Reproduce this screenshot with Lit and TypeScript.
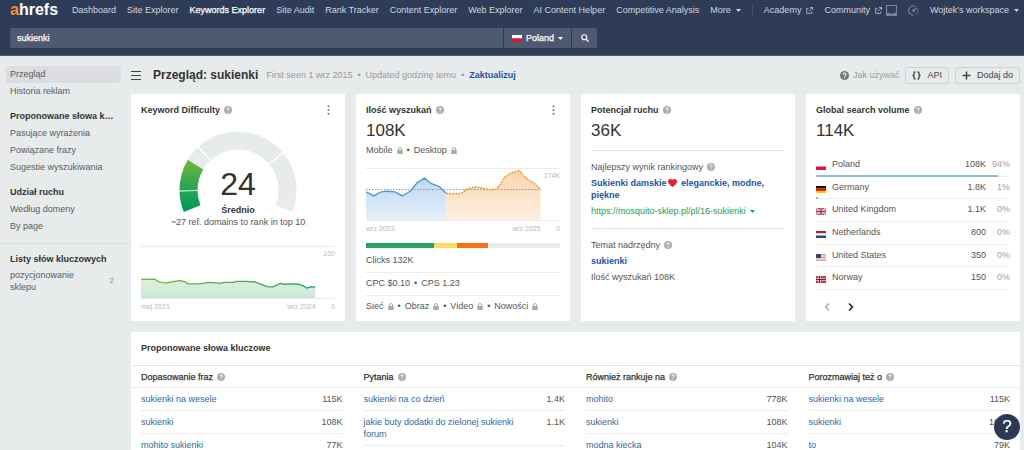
import { LitElement, html, svg, css, nothing } from "lit";
import { customElement, property } from "lit/decorators.js";

type Point = [number, number];

const CHART_W = 580;
const CHART_H = 156;

const difficulty: Point[] = [
  [0, 99], [40, 98], [52, 106], [65, 109], [77, 110], [95, 106], [117, 103], [130, 106], [142, 113], [172, 113],
  [207, 108], [235, 111], [250, 108], [275, 108], [287, 105], [312, 105], [342, 107], [362, 115], [377, 121],
  [395, 122], [417, 111], [429, 114], [442, 113], [472, 114], [484, 118], [497, 126], [508, 121], [521, 123],
];
const volume: Point[] = [
  [0, 70], [23, 82], [43, 71], [63, 68], [86, 70], [109, 82], [131, 69], [153, 42], [175, 28], [196, 45], [218, 53], [240, 75],
];
const forecast: Point[] = [
  [240, 75], [278, 76], [288, 72], [305, 60], [328, 55], [348, 58], [368, 64], [388, 62], [400, 48], [413, 27],
  [433, 12], [458, 5], [478, 28], [501, 43], [522, 62],
];

const line = (p: Point[]) => p.map(([x, y]) => `${x},${y}`).join(" ");
const area = (p: Point[]) => `${p[0][0]},${CHART_H} ${line(p)} ${p[p.length - 1][0]},${CHART_H}`;

const polar = (r: number, deg: number) => {
  const a = (deg * Math.PI) / 180;
  return `${(59 - r * Math.cos(a)).toFixed(2)} ${(59 - r * Math.sin(a)).toFixed(2)}`;
};
const ring = (from: number, to: number) =>
  `M${polar(58.5, from)}A58.5 58.5 0 0 1 ${polar(58.5, to)}L${polar(40.5, to)}A40.5 40.5 0 0 0 ${polar(40.5, from)}Z`;

const flags: Record<string, unknown> = {
  pl: svg`<path fill="#fff" d="M0 0h20v7H0z"/><path fill="#dc143c" d="M0 7h20v7H0z"/>`,
  de: svg`<path fill="#111" d="M0 0h20v5H0z"/><path fill="#e00" d="M0 5h20v5H0z"/><path fill="#fc0" d="M0 9.500h20V14H0z"/>`,
  gb: svg`<path fill="#2b3f86" d="M0 0h20v14H0z"/><path stroke="#fff" stroke-width="3" d="M0 0l20 14M20 0L0 14"/><path stroke="#d5203a" stroke-width="1" d="M0 0l20 14M20 0L0 14"/><path stroke="#fff" stroke-width="5" d="M10 0v14M0 7h20"/><path stroke="#d5203a" stroke-width="3" d="M10 0v14M0 7h20"/>`,
  nl: svg`<path fill="#b3262f" d="M0 0h20v5H0z"/><path fill="#fff" d="M0 5h20v4H0z"/><path fill="#24469a" d="M0 9h20v5H0z"/>`,
  us: svg`<path fill="#f3e6e8" d="M0 0h20v14H0z"/><path stroke="#d4707c" stroke-width="1.100" d="M0 1h20M0 4h20M0 7h20M0 10h20M0 13h20"/><path fill="#34437a" d="M0 0h10v8H0z"/>`,
  no: svg`<path fill="#e02f45" d="M0 0h20v14H0z"/><path stroke="#fff" stroke-width="4" d="M7 0v14M0 7h20"/><path stroke="#27408b" stroke-width="2" d="M7 0v14M0 7h20"/>`,
};
const flag = (code: string) =>
  html`<svg class="flag" viewBox="0 0 20 14" preserveAspectRatio="none" aria-hidden="true">${flags[code]}</svg>`;

const help = html`<svg class="help" viewBox="0 0 16 16" aria-hidden="true">
  <circle cx="8" cy="8" r="8" fill="currentColor" />
  <path d="M5.400 6.200C5.400 4.500 6.500 3.700 8 3.700s2.600.9 2.600 2.200c0 1.700-2.400 1.800-2.400 3.700" fill="none" stroke="#fff" stroke-width="1.800" />
  <circle cx="8.200" cy="12.100" r="1.200" fill="#fff" />
</svg>`;
const lock = html`<svg class="lock" viewBox="0 0 12 14" aria-hidden="true">
  <path d="M3 7V4a3 3 0 0 1 6 0v3" fill="none" stroke="#aaa" stroke-width="2" />
  <rect x="0.500" y="6" width="11" height="8" rx="1" fill="#aaa" />
</svg>`;
const caret = html`<svg class="caret" viewBox="0 0 10 6" aria-hidden="true"><path d="M0 0h10L5 6z" fill="currentColor" /></svg>`;
const external = html`<svg class="ext" viewBox="0 0 16 16" fill="none" stroke="currentColor" stroke-width="1.600" aria-hidden="true">
  <path d="M6 3H1.500v11.500H13V10M9 1h6v6M15 1L6.500 9.500" />
</svg>`;
const dots = html`<button class="dots" aria-label="Menu">
  <svg viewBox="0 0 4 16" fill="#8c8c8c"><circle cx="2" cy="2" r="1.800" /><circle cx="2" cy="8" r="1.800" /><circle cx="2" cy="14" r="1.800" /></svg>
</button>`;

const base = css`
  * { box-sizing: border-box; }
  a { color: inherit; text-decoration: none; }
  h1, h2, h3, p { margin: 0; padding: 0; }
  h2, h3 { font-size: 9px; line-height: 12px; }
  button { font: inherit; color: inherit; border: 0; background: none; padding: 0; margin: 0; cursor: pointer; }
  svg { display: block; flex: none; }
  table { border-collapse: separate; border-spacing: 0; width: 100%; }
  td { padding: 0; }
  .help { width: 8px; height: 8px; color: #adadad; }
  .lock { width: 6px; height: 7px; }
  .caret { width: 5px; height: 3px; }
  .ext { width: 7px; height: 7px; }
  .flag { width: 10px; height: 7px; }
  .medium { font-weight: 400; -webkit-text-stroke: 0.25px currentColor; }
  .row { display: flex; align-items: center; gap: 4px; }
`;

@customElement("top-bar")
class TopBar extends LitElement {
  static styles = [base, css`
    :host { display: block; background: #2f3c57; border-bottom: 1px solid #4b5672; color: #d2d6df; padding-bottom: 7px; }
    .nav { display: flex; align-items: center; height: 20px; padding: 0 5px 0 10px; gap: 11px; white-space: nowrap; }
    .logo { font-size: 16px; line-height: 20px; font-weight: 700; color: #fff; margin-right: 3px; }
    .logo-a { color: #ff8b1a; }
    .link { display: flex; align-items: center; gap: 5px; }
    .active { color: #fff; }
    .end { display: flex; align-items: center; gap: 11px; margin-left: auto; }
    .sep { width: 1px; height: 12px; background: #414d69; }
    .community { display: flex; align-items: center; gap: 4px; }
    .faint { width: 11px; height: 11px; color: #7c859a; }
    .search { display: flex; gap: 1px; margin: 8px 10px 0; max-width: 587px; height: 20px; color: #fff; }
    .field { flex: 1; min-width: 0; background: #4f5a72; border: 0; border-radius: 2px 0 0 2px; padding: 0 7px; font: inherit; color: inherit; outline: 0; }
    .country { display: flex; align-items: center; justify-content: center; gap: 4px; width: 67px; background: #4f5a72; }
    .go { display: grid; place-items: center; width: 25px; background: #4f5a72; border-radius: 0 2px 2px 0; }
    .glass { width: 8px; height: 8px; }
  `];

  render() {
    const links = ["Dashboard", "Site Explorer", "Keywords Explorer", "Site Audit", "Rank Tracker", "Content Explorer",
      "Web Explorer", "AI Content Helper", "Competitive Analysis"];
    return html`
      <nav class="nav">
        <a class="logo" href="#"><span class="logo-a">a</span>hrefs</a>
        ${links.map((l) => html`<a href="#" class=${l === "Keywords Explorer" ? "active medium" : "link"}>${l}</a>`)}
        <a class="link" href="#">More ${caret}</a>
        <div class="end">
          <span class="sep"></span>
          <a class="link" href="#">Academy ${external}</a>
          <div class="community">
            <a class="link" href="#">Community ${external}</a>
            <svg class="faint" viewBox="0 0 20 20" fill="none" stroke="currentColor" stroke-width="2" aria-hidden="true">
              <path d="M1 1h18v18H1z" /><path d="M1 15h5l1 2h6l1-2h5v4H1z" fill="currentColor" />
            </svg>
          </div>
          <svg class="faint" viewBox="0 0 20 20" fill="none" stroke="currentColor" stroke-width="2" aria-hidden="true">
            <path d="M14 2.700A8.500 8.500 0 1 0 10 18.500" /><path d="M10 10l6-5" /><path d="M17.500 7a8.500 8.500 0 0 1-5 11" stroke-dasharray="2 2.500" />
            <circle cx="10" cy="10" r="1.500" />
          </svg>
          <a class="link" href="#">Wojtek's workspace ${caret}</a>
        </div>
      </nav>
      <form class="search" @submit=${(e: Event) => e.preventDefault()}>
        <input class="field medium" aria-label="Keyword" .value=${"sukienki"} />
        <button class="country medium" type="button">${flag("pl")} Poland ${caret}</button>
        <button class="go" aria-label="Search">
          <svg class="glass" viewBox="0 0 16 16" fill="none" stroke="currentColor" stroke-width="2.400" aria-hidden="true">
            <circle cx="6.500" cy="6.500" r="5" /><path d="M10 10l5 5" stroke-width="3" />
          </svg>
        </button>
      </form>`;
  }
}

@customElement("side-bar")
class SideBar extends LitElement {
  static styles = [base, css`
    :host { display: block; padding-top: 10px; color: #5a5c5f; }
    .group { padding: 0 10px 8px 6px; }
    .item, .head { display: block; line-height: 17px; padding: 0 4px; }
    .head { color: #333; font-weight: 700; padding-right: 6px; overflow: hidden; text-overflow: ellipsis; white-space: nowrap; }
    .current { background: #dbdde0; border-radius: 2px; }
    .lists { border-top: 1px solid #dcdee0; padding-top: 7px; }
    .list { display: flex; align-items: center; justify-content: space-between; line-height: 12px; padding: 1px 7px 2px 4px; }
    .name { width: 70px; }
    .count { color: #8c8e90; font-size: 8px; }
  `];

  render() {
    const groups: [string, string[]][] = [
      ["", ["Przegląd", "Historia reklam"]],
      ["Proponowane słowa kluczowe", ["Pasujące wyrażenia", "Powiązane frazy", "Sugestie wyszukiwania"]],
      ["Udział ruchu", ["Według domeny", "By page"]],
    ];
    return html`
      ${groups.map(([head, items]) => html`<div class="group">
        ${head ? html`<h3 class="head">${head}</h3>` : nothing}
        ${items.map((i) => html`<a href="#" class=${i === "Przegląd" ? "item current" : "item"}>${i}</a>`)}
      </div>`)}
      <div class="lists"><div class="group">
        <h3 class="head">Listy słów kluczowych</h3>
        <a class="list" href="#"><span class="name">pozycjonowanie sklepu</span><span class="count">2</span></a>
      </div></div>`;
  }
}

@customElement("trend-chart")
class TrendChart extends LitElement {
  @property() kind = "";
  @property() from = "";
  @property() to = "";
  @property() max = "";

  static styles = [base, css`
    :host { display: block; font-size: 7px; line-height: 16px; color: #b9b9b9; }
    .frame { display: grid; border-top: 1px solid #e9ebec; border-bottom: 1px solid #e9ebec; }
    .plot, .max { grid-area: 1 / 1; }
    .plot { width: 100%; height: 51px; overflow: visible; }
    .plot * { vector-effect: non-scaling-stroke; }
    .max { justify-self: end; line-height: 14px; }
    .axis { display: grid; grid-template-columns: 9fr 1fr; }
    .dates { display: flex; justify-content: space-between; }
    .zero { text-align: right; }
  `];

  render() {
    const plot = this.kind === "difficulty"
      ? svg`<defs>
          <linearGradient id="fill" x2="0" y2="1"><stop stop-color="#e0f0d8"/><stop offset="1" stop-color="#c8e8dd"/></linearGradient>
          <linearGradient id="stroke"><stop stop-color="#74b843"/><stop offset="1" stop-color="#22a35f"/></linearGradient>
        </defs>
        <polygon points=${area(difficulty)} fill="url(#fill)"/>
        <polyline points=${line(difficulty)} fill="none" stroke="url(#stroke)" stroke-width="1.300" stroke-linejoin="round"/>`
      : svg`<defs>
          <linearGradient id="blue" x2="0" y2="1"><stop stop-color="#bcd8f3"/><stop offset="1" stop-color="#e6f0fa"/></linearGradient>
          <linearGradient id="orange" x2="0" y2="1"><stop stop-color="#fbd5ac"/><stop offset="1" stop-color="#fdf0e1"/></linearGradient>
        </defs>
        <polygon points=${area(volume)} fill="url(#blue)"/>
        <polygon points=${area(forecast)} fill="url(#orange)"/>
        <path d="M0 63H522" stroke="#8e9296" stroke-width="1" stroke-dasharray="1.500 1.500"/>
        <polyline points=${line(volume)} fill="none" stroke="#4a95da" stroke-width="1.300" stroke-linejoin="round"/>
        <polyline points=${line(forecast)} fill="none" stroke="#f09a34" stroke-width="1.700" stroke-dasharray="1.800 1.200"/>`;
    return html`
      <div class="frame">
        <svg class="plot" viewBox="0 0 ${CHART_W} ${CHART_H}" preserveAspectRatio="none" aria-hidden="true">${plot}</svg>
        <span class="max">${this.max}</span>
      </div>
      <div class="axis">
        <div class="dates"><span>${this.from}</span><span>${this.to}</span></div>
        <span class="zero">0</span>
      </div>`;
  }
}

@customElement("app-root")
class AppRoot extends LitElement {
  static styles = [base, css`
    :host { display: block; min-height: 100vh; background: #e8ebec; font: 9px/12px "Liberation Sans", Arial, sans-serif; color: #555; }
    .body { display: grid; grid-template-columns: 131px minmax(0, 1fr); }
    .main { padding-right: 4px; }
    .titlebar { display: flex; align-items: center; height: 38px; }
    .burger { display: grid; gap: 2px; width: 10px; margin-right: 12px; }
    .bar { height: 1px; background: #444; }
    .burger { gap: 3px; }
    h1 { font-size: 12px; line-height: 16px; color: #333; margin-right: 8px; }
    .meta { color: #999; }
    .update { color: #1a55a8; font-weight: 700; }
    .actions { display: flex; align-items: center; gap: 6px; margin-left: auto; }
    .how { display: flex; align-items: center; gap: 4px; color: #999; }
    .how .help { width: 9px; height: 9px; color: #777; }
    .btn { display: flex; align-items: center; gap: 6px; height: 17px; padding: 0 6px; border: 1px solid #d0d3d6; border-radius: 2px; color: #444; }
    .glyph { width: 9px; height: 9px; }
    .cards { display: grid; grid-template-columns: repeat(4, minmax(0, 1fr)); gap: 11px; }
    .card { background: #fff; padding: 10px 10px 6px; }
    .head { display: flex; align-items: center; gap: 4px; height: 12px; color: #333; }
    .dots { margin-left: auto; width: 14px; height: 12px; display: grid; place-items: center; }
    .dots svg { width: 3px; height: 10px; }
    .big { font-size: 17px; line-height: 20px; color: #333; margin: 5px 0 3px; }
    .gauge { display: grid; justify-items: center; margin-top: 15px; }
    .dial, .score { grid-area: 1 / 1; }
    .dial { width: 118px; height: 82px; }
    .score { align-self: end; font-size: 32px; line-height: 36px; color: #333; padding-bottom: 11px; }
    .level { text-align: center; font-weight: 700; color: #333; margin-top: -9px; }
    .center { text-align: center; margin-bottom: 18px; }
    .device { margin: 1px 0 12px; }
    .split { display: flex; height: 5px; background: #e8ebec; margin: 6px 0; }
    .seg-a { background: #24a566; }
    .seg-b { background: #fbdc62; }
    .seg-c { background: #fa6e14; }
    .line { border-top: 1px solid #e9ebec; padding-top: 4px; margin-top: 6px; }
    .section { border-top: 1px solid #e0e3e5; margin-top: 9px; padding-top: 10px; }
    .section + .section { margin-top: 11px; }
    .bold { color: #1a55a8; font-weight: 700; display: block; margin: 4px 0; }
    .heart { display: inline-block; width: 9px; height: 8px; vertical-align: -1px; margin: 0 2px 0 1px; }
    .url { display: flex; align-items: center; gap: 4px; color: #1ba05c; white-space: nowrap; }
    .countries { height: 136px; margin-top: 13px; }
    .countries td { vertical-align: top; border-bottom: 1px solid #ececee; padding-top: 4px; }
    .countries .flagcell { width: 16px; padding-top: 9px; }
    .num { text-align: right; }
    .countries .pct { width: 24px; color: #a3a3a3; }
    .share { background: linear-gradient(#8ebbd8, #8ebbd8) no-repeat 0 100% / var(--share) 2px, linear-gradient(#ececee, #ececee) no-repeat 0 100% / 100% 1px; }
    .countries .share td { border-color: transparent; }
    .pager { display: flex; gap: 18px; padding: 13px 0 0 8px; }
    .arrow { width: 6px; height: 8px; }
    .dim { color: #aaa; }
    .strong { color: #222; }
    .ideas { background: #fff; margin-top: 11px; padding-bottom: 10px; }
    .ideas h2 { padding: 11px 10px; line-height: 11px; color: #333; border-bottom: 1px solid #e4e6e8; }
    .heads, .lists { display: grid; grid-template-columns: repeat(4, minmax(0, 1fr)); gap: 21px; padding: 0 10px; }
    .heads { border-bottom: 1px solid #ececee; }
    .heads .head { height: 21px; }
    .ideas td { border-bottom: 1px solid #ececee; padding: 5px 0; vertical-align: top; }
    .ideas a { color: #2f68a8; display: block; max-width: 160px; }
    .fab { position: fixed; right: 4px; bottom: 10px; width: 26px; height: 26px; border-radius: 50%; background: #2c3a58; color: #fff; font-size: 17px; line-height: 26px; text-align: center; }
  `];

  head(title: string, menu = false) {
    return html`<h2 class="head">${title} ${help}${menu ? dots : nothing}</h2>`;
  }

  difficultyCard() {
    return html`<section class="card">
      ${this.head("Keyword Difficulty", true)}
      <div class="gauge">
        <svg class="dial" viewBox="0 0 118 82" aria-hidden="true">
          <defs><linearGradient id="g" gradientUnits="userSpaceOnUse" x1="0" y1="28" x2="0" y2="80"><stop stop-color="#76b83a" /><stop offset=".5" stop-color="#2fa650" /><stop offset="1" stop-color="#009a5c" /></linearGradient></defs>
          <path d=${ring(-22, -1.5)} fill="url(#g)" />
          <path d=${ring(-0.5, 31)} fill="url(#g)" />
          <path d=${ring(31, 46.5)} fill="#e8ebec" />
          <path d=${ring(48, 139.5)} fill="#e8ebec" />
          <path d=${ring(141, 202)} fill="#e8ebec" />
        </svg>
        <span class="score">24</span>
      </div>
      <p class="level">Średnio</p>
      <p class="center">~27 ref. domains to rank in top 10</p>
      <trend-chart kind="difficulty" from="maj 2021" to="wrz 2024" max="100"></trend-chart>
    </section>`;
  }

  volumeCard() {
    const features = ["Sieć", "Obraz", "Video", "Nowości"];
    return html`<section class="card">
      ${this.head("Ilość wyszukań", true)}
      <p class="big">108K</p>
      <p class="row device">Mobile ${lock} <span>•</span> Desktop ${lock}</p>
      <trend-chart kind="volume" from="wrz 2023" to="wrz 2025" max="174K"></trend-chart>
      <div class="split">
        ${[["a", 35], ["b", 12], ["c", 16]].map(([k, w]) => html`<span class="seg-${k}" style="width:${w}%"></span>`)}
      </div>
      <p>Clicks 132K</p>
      <p class="line row"><span>CPC $0.10</span><span>•</span><span>CPS 1.23</span></p>
      <p class="line row">${features.map((f, i) => html`${i ? html`<span>•</span>` : nothing}<span>${f}</span>${lock}`)}</p>
    </section>`;
  }

  potentialCard() {
    return html`<section class="card">
      ${this.head("Potencjał ruchu")}
      <p class="big">36K</p>
      <div class="section">
        <p class="row">Najlepszy wynik rankingowy ${help}</p>
        <a class="bold" href="#">Sukienki damskie<svg class="heart" viewBox="0 0 18 16" aria-hidden="true"><path fill="#ee2229" d="M9 16C3 11 0 8 0 4.800 0 2 2 0 4.800 0 6.500 0 8 .8 9 2.200 10 .8 11.500 0 13.200 0 16 0 18 2 18 4.800 18 8 15 11 9 16z"/></svg> eleganckie, modne, piękne</a>
        <a class="url" href="#">https://mosquito-sklep.pl/pl/16-sukienki ${caret}</a>
      </div>
      <div class="section">
        <p class="row">Temat nadrzędny ${help}</p>
        <a class="bold" href="#">sukienki</a>
        <p>Ilość wyszukań 108K</p>
      </div>
    </section>`;
  }

  globalCard() {
    const rows: [string, string, string, number][] = [
      ["pl", "Poland", "108K", 94], ["de", "Germany", "1.8K", 1], ["gb", "United Kingdom", "1.1K", 0],
      ["nl", "Netherlands", "800", 0], ["us", "United States", "350", 0], ["no", "Norway", "150", 0],
    ];
    return html`<section class="card">
      ${this.head("Global search volume")}
      <p class="big">114K</p>
      <table class="countries">
        ${rows.map(([code, name, vol, pct]) => html`
          <tr class=${pct ? "share" : ""} style="--share:${pct}%"><td class="flagcell">${flag(code)}</td><td>${name}</td><td class="num">${vol}</td><td class="num pct">${pct}%</td></tr>`)}
      </table>
      <div class="pager">
        <button class="dim" aria-label="Previous"><svg class="arrow" viewBox="0 0 6 8" fill="none" stroke="currentColor" stroke-width="1.300"><path d="M5 .5L1.500 4 5 7.500" /></svg></button>
        <button class="strong" aria-label="Next"><svg class="arrow" viewBox="0 0 6 8" fill="none" stroke="currentColor" stroke-width="1.500"><path d="M1 .5L4.500 4 1 7.500" /></svg></button>
      </div>
    </section>`;
  }

  ideas() {
    const cols: [string, [string, string][]][] = [
      ["Dopasowanie fraz", [["sukienki na wesele", "115K"], ["sukienki", "108K"], ["mohito sukienki", "77K"]]],
      ["Pytania", [["sukienki na co dzień", "1.4K"], ["jakie buty dodatki do zielonej sukienki forum", "1.1K"]]],
      ["Również rankuje na", [["mohito", "778K"], ["sukienki", "108K"], ["modna kiecka", "104K"]]],
      ["Porozmawiaj też o", [["sukienki na wesele", "115K"], ["sukienki", "108K"], ["to", "79K"]]],
    ];
    return html`<section class="ideas">
      <h2>Proponowane słowa kluczowe</h2>
      <div class="heads">${cols.map(([t]) => html`<h3 class="head medium">${t} ${help}</h3>`)}</div>
      <div class="lists">${cols.map(([, rows]) => html`<div><table>
        ${rows.map(([k, v]) => html`<tr><td><a href="#">${k}</a></td><td class="num">${v}</td></tr>`)}
      </table></div>`)}</div>
    </section>`;
  }

  render() {
    return html`
      <top-bar></top-bar>
      <div class="body">
        <side-bar></side-bar>
        <main class="main">
          <div class="titlebar">
            <button class="burger" aria-label="Menu"><span class="bar"></span><span class="bar"></span><span class="bar"></span></button>
            <h1>Przegląd: sukienki</h1>
            <span class="meta">First seen 1 wrz 2015 &nbsp;•&nbsp; Updated godzinę temu &nbsp;•&nbsp; <a class="update" href="#">Zaktualizuj</a></span>
            <div class="actions">
              <a class="how" href="#">${help} Jak używać</a>
              <button class="btn"><svg class="glyph" viewBox="0 0 18 18" fill="none" stroke="currentColor" stroke-width="2.600" aria-hidden="true"><path d="M7 2H6Q4 2 4 4v3L2 9l2 2v3q0 2 2 2h1M11 2h1q2 0 2 2v3l2 2-2 2v3q0 2-2 2h-1" /></svg>API</button>
              <button class="btn"><svg class="glyph" viewBox="0 0 9 9" stroke="currentColor" stroke-width="1.500" aria-hidden="true"><path d="M4.500 .5v8M.5 4.500h8" /></svg>Dodaj do</button>
            </div>
          </div>
          <div class="cards">${this.difficultyCard()}${this.volumeCard()}${this.potentialCard()}${this.globalCard()}</div>
          ${this.ideas()}
        </main>
      </div>
      <button class="fab medium" aria-label="Help">?</button>`;
  }
}
